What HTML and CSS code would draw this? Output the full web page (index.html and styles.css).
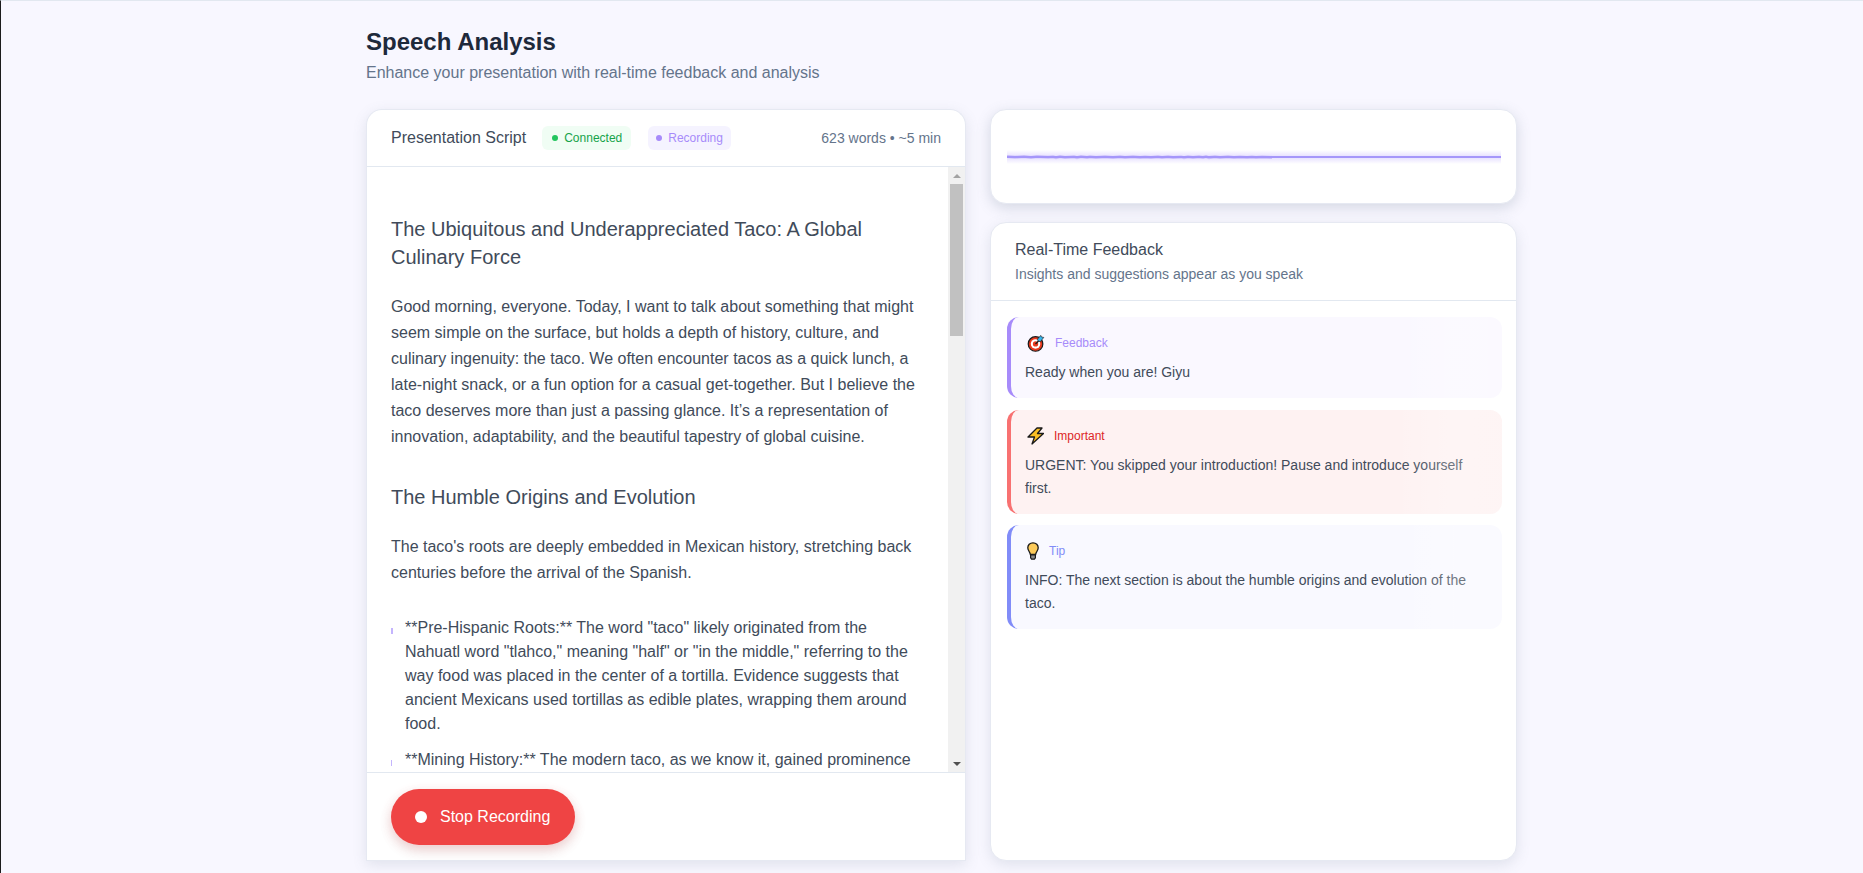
FILE: index.html
```html
<!DOCTYPE html>
<html lang="en">
<head>
    <meta charset="UTF-8">
    <meta name="viewport" content="width=device-width, initial-scale=1.0">
    <title>Speech Analysis</title>
    <link rel="stylesheet" href="styles.css">
</head>
<body>
    <main class="page">
        <header class="page-head">
            <h1>Speech Analysis</h1>
            <p>Enhance your presentation with real-time feedback and analysis</p>
        </header>

        <div class="columns">
            <section class="card script-card">
                <div class="script-head">
                    <h2>Presentation Script</h2>
                    <span class="badge badge-green"><i class="dot"></i>Connected</span>
                    <span class="badge badge-purple"><i class="dot"></i>Recording</span>
                    <span class="word-count">623 words • ~5 min</span>
                </div>

                <div class="script-view">
                    <div class="script-body">
                        <h3>The Ubiquitous and Underappreciated Taco: A Global Culinary Force</h3>
                        <p>Good morning, everyone. Today, I want to talk about something that might seem simple on the surface, but holds a depth of history, culture, and culinary ingenuity: the taco. We often encounter tacos as a quick lunch, a late-night snack, or a fun option for a casual get-together. But I believe the taco deserves more than just a passing glance. It’s a representation of innovation, adaptability, and the beautiful tapestry of global cuisine.</p>

                        <h3>The Humble Origins and Evolution</h3>
                        <p class="before-list">The taco's roots are deeply embedded in Mexican history, stretching back centuries before the arrival of the Spanish.</p>
                        <ul>
                            <li>**Pre-Hispanic Roots:** The word "taco" likely originated from the Nahuatl word "tlahco," meaning "half" or "in the middle," referring to the way food was placed in the center of a tortilla. Evidence suggests that ancient Mexicans used tortillas as edible plates, wrapping them around food.</li>
                            <li class="faint">**Mining History:** The modern taco, as we know it, gained prominence</li>
                        </ul>
                    </div>

                    <div class="scrollbar">
                        <div class="scroll-btn"><i class="arrow-up"></i></div>
                        <div class="scroll-track"><div class="scroll-thumb"></div></div>
                        <div class="scroll-btn"><i class="arrow-down"></i></div>
                    </div>
                </div>

                <div class="script-foot">
                    <button class="stop-btn"><i class="stop-dot"></i>Stop Recording</button>
                </div>
            </section>

            <div class="side">
                <section class="card wave-card">
                    <svg class="wave" viewBox="0 0 494 14" preserveAspectRatio="none">
                        <path class="wave-fuzz" d="M0 6.600l8 .6 9-.6 7 .8 6-.8 11 .7 5-.6 3 .9 4-1 5 .9 9-.8 3 .9 4-1 6 .8 3-.6 6 .6 9-.7 8 .8 7-.7 5 .6 8-.7 7 .8 5-.6 6 .7 7-.8 4 .6 6-.6 5 .8 8-.7 3 .7 4-.9 5 .9 6-.8 4 .7 3-.9 3 1 6-.8 5 .6 8-.6 6 .6 6-.4 7 .4 5-.4 4 .4 6-.4 10 .4"/>
                        <path class="wave-line" d="M0 7h494"/>
                    </svg>
                </section>

                <section class="card feedback-card">
                    <div class="feedback-head">
                        <h2>Real-Time Feedback</h2>
                        <p>Insights and suggestions appear as you speak</p>
                    </div>

                    <div class="feedback-list">
                        <article class="note note-purple">
                            <div class="note-title">
                                <svg class="note-icon icon-target" viewBox="0 0 18 19">
                                    <circle cx="8.500" cy="10.500" r="7.700" fill="#e8391d" stroke="#1a1a1a" stroke-width="1.300"/>
                                    <circle cx="8.500" cy="10.500" r="5" fill="#fff"/>
                                    <circle cx="8.500" cy="10.500" r="2.800" fill="#e8391d"/>
                                    <path d="M8.500 10.500L14 5" stroke="#1a1a1a" stroke-width="1.500"/>
                                    <path d="M10.500 5.500L14 1.500l.8 1.700 2.400.4-3.500 4.400-2.300-.4z" fill="#35b6ee" stroke="#1a1a1a" stroke-width=".7"/>
                                </svg>
                                <span>Feedback</span>
                            </div>
                            <p>Ready when you are! Giyu</p>
                        </article>

                        <article class="note note-red">
                            <div class="note-title">
                                <svg class="note-icon icon-zap" viewBox="0 0 17 18">
                                    <path d="M10 1L1 10h6.500L5 17 16.500 6.500h-6L15 1z" fill="#fbbf24" stroke="#1a1a1a" stroke-width="1.300" stroke-linejoin="round"/>
                                </svg>
                                <span>Important</span>
                            </div>
                            <p>URGENT: You skipped your introduction! Pause and introduce yourself first.</p>
                        </article>

                        <article class="note note-blue">
                            <div class="note-title">
                                <svg class="note-icon icon-bulb" viewBox="0 0 12 18">
                                    <path d="M6 .8C2.800.8.800 3 .8 5.800c0 2.700 2 3.700 2.600 6.700h5.200c.6-3 2.600-4 2.600-6.700C11.200 3 9.200.8 6 .8z" fill="#fdcb5a" stroke="#1a1a1a" stroke-width="1.300"/>
                                    <path d="M3.600 12.800h4.800v3l-1 1.400H4.600l-1-1.400z" fill="#8c8c8c" stroke="#1a1a1a" stroke-width="1.200"/>
                                </svg>
                                <span>Tip</span>
                            </div>
                            <p>INFO: The next section is about the humble origins and evolution of the taco.</p>
                        </article>
                    </div>
                </section>
            </div>
        </div>
    </main>
</body>
</html>
```

FILE: styles.css
```css
* {
    box-sizing: border-box;
}
html, body {
    height: 100%;
}
body {
    margin: 0;
    overflow: hidden;
    font-family: 'Liberation Sans', Arial, sans-serif;
    color: #414b5a;
    background-color: #f8f7ff;
    border-top: 1px solid #e2e8f0;
    border-left: 1px solid #1c1c1c;
}
.page {
    width: 1151px;
    margin-left: 365px;
}
.page-head {
    padding-top: 27px;
    margin-bottom: 24px;
}
.page-head h1 {
    margin: 0;
    font-size: 24px;
    line-height: 27px;
    font-weight: 700;
    color: #1e293b;
}
.page-head p {
    margin: 6px 0 0;
    font-size: 16px;
    line-height: 24px;
    color: #64748b;
}
.columns {
    display: grid;
    grid-template-columns: 600px 527px;
    gap: 24px;
    height: 752px;
}
.card {
    background-color: white;
    border: 1px solid #e6e9f2;
    border-radius: 16px;
    box-shadow: 0 4px 14px rgba(100, 116, 139, 0.16);
}

/* script card */
.script-card {
    display: flex;
    flex-direction: column;
    min-height: 0;
    border-bottom: none;
    border-radius: 16px 16px 0 0;
}
.script-head {
    display: flex;
    align-items: center;
    height: 57px;
    padding: 0 24px;
    flex: none;
    border-bottom: 1px solid #e2e8f0;
}
.script-head h2 {
    margin: 0 16px 0 0;
    font-size: 16px;
    font-weight: 400;
}
.badge {
    display: inline-flex;
    align-items: center;
    height: 24px;
    border-radius: 6px;
    font-size: 12px;
}
.badge .dot {
    width: 6px;
    height: 6px;
    margin-right: 6px;
    border-radius: 50%;
}
.badge-green {
    padding: 0 9px 0 10px;
    background-color: #f0fdf4;
    color: #16a34a;
}
.badge-green .dot {
    background-color: #22c55e;
}
.badge-purple {
    margin-left: 17px;
    padding: 0 8px;
    background-color: #f5f3ff;
    color: #a78bfa;
}
.badge-purple .dot {
    background-color: #a78bfa;
}
.word-count {
    margin-left: auto;
    font-size: 14px;
    color: #64748b;
}
.script-view {
    flex: 1;
    min-height: 0;
    display: flex;
}
.script-body {
    flex: 1;
    min-width: 0;
    overflow: hidden;
    padding: 48px 24px 0;
}
.script-body h3 {
    margin: 0 0 23px;
    font-size: 20px;
    line-height: 28px;
    font-weight: 400;
}
.script-body p {
    margin: 0 0 33px;
    font-size: 16px;
    line-height: 26px;
}
.script-body p.before-list {
    margin-bottom: 30px;
}
.script-body ul {
    margin: 0;
    padding: 0 0 0 14px;
    list-style: none;
}
.script-body li {
    position: relative;
    margin-bottom: 12px;
    font-size: 16px;
    line-height: 24px;
}
.script-body li::before {
    content: "";
    position: absolute;
    left: -14px;
    top: 12px;
    width: 2px;
    height: 6px;
    background-color: #c4b5fd;
}
.script-body li.faint::before {
    width: 1px;
}

/* scrollbar of the script view */
.scrollbar {
    flex: none;
    width: 17px;
    display: flex;
    flex-direction: column;
    background-color: #f1f1f1;
}
.scroll-btn {
    flex: none;
    height: 17px;
    display: flex;
    align-items: center;
    justify-content: center;
}
.arrow-up,
.arrow-down {
    width: 0;
    height: 0;
    border-left: 4px solid transparent;
    border-right: 4px solid transparent;
}
.arrow-up {
    border-bottom: 4px solid #a3a3a3;
}
.arrow-down {
    border-top: 4px solid #505050;
}
.scroll-track {
    flex: 1;
    padding: 0 2px;
}
.scroll-thumb {
    height: 152px;
    background-color: #c1c1c1;
}

.script-foot {
    flex: none;
    height: 89px;
    padding: 16px 24px;
    border-top: 1px solid #e2e8f0;
    border-bottom: 1px solid #e6e9f2;
    background-color: white;
}
.stop-btn {
    display: inline-flex;
    align-items: center;
    height: 56px;
    padding: 0 25px 0 24px;
    border: none;
    border-radius: 28px;
    background-color: #ef4444;
    color: white;
    font-family: inherit;
    font-size: 16px;
    box-shadow: 0 4px 12px rgba(239, 68, 68, 0.2), 0 6px 14px rgba(0, 0, 0, 0.08);
}
.stop-dot {
    width: 12px;
    height: 12px;
    margin-right: 13px;
    border-radius: 50%;
    background-color: white;
}

/* right column */
.side {
    display: flex;
    flex-direction: column;
    gap: 18px;
    min-height: 0;
}
.wave-card {
    flex: none;
    height: 95px;
    padding: 40px 16px 0;
    box-shadow: 0 4px 14px rgba(100, 116, 139, 0.24);
}
.wave {
    display: block;
    width: 494px;
    height: 14px;
    background: linear-gradient(180deg, transparent, #e9e3ff 42%, #e9e3ff 58%, transparent);
}
.wave path {
    fill: none;
}
.wave-fuzz {
    stroke: #c9bdfc;
    stroke-width: 3;
}
.wave-line {
    stroke: #a596fa;
    stroke-width: 2;
}
.feedback-card {
    flex: 1;
    min-height: 0;
}
.feedback-head {
    height: 78px;
    padding: 16px 24px 0;
    border-bottom: 1px solid #e2e8f0;
}
.feedback-head h2 {
    margin: 0;
    font-size: 16px;
    line-height: 22px;
    font-weight: 400;
}
.feedback-head p {
    margin: 3px 0 0;
    font-size: 14px;
    line-height: 20px;
    color: #64748b;
}
.feedback-list {
    display: flex;
    flex-direction: column;
    gap: 11.5px;
    padding: 16px 14px 16px 16px;
}
.note {
    position: relative;
    padding: 15px 14px 14px;
    border-left: 4px solid;
    border-radius: 12px;
}
.note::after {
    content: "";
    position: absolute;
    inset: 0;
    border-radius: inherit;
    background: linear-gradient(90deg, transparent 78%, rgba(255, 255, 255, 0.25) 90%, rgba(255, 255, 255, 0.2));
}
.note-title {
    display: flex;
    align-items: center;
    gap: 10px;
    height: 22px;
    padding-left: 2px;
    font-size: 12px;
}
.note-icon {
    flex: none;
    height: 18px;
}
.icon-target {
    width: 18px;
}
.icon-zap {
    width: 17px;
}
.icon-bulb {
    width: 12px;
}
.note p {
    margin: 7px 0 0;
    font-size: 14px;
    line-height: 23px;
}
.note-purple {
    border-left-color: #a78bfa;
    background-color: #faf8ff;
}
.note-purple .note-title {
    color: #a78bfa;
}
.note-red {
    border-left-color: #f87171;
    background-color: #fef2f2;
}
.note-red .note-title {
    color: #dc2626;
}
.note-blue {
    border-left-color: #818cf8;
    background-color: #f9f9ff;
}
.note-blue .note-title {
    color: #818cf8;
}
```
